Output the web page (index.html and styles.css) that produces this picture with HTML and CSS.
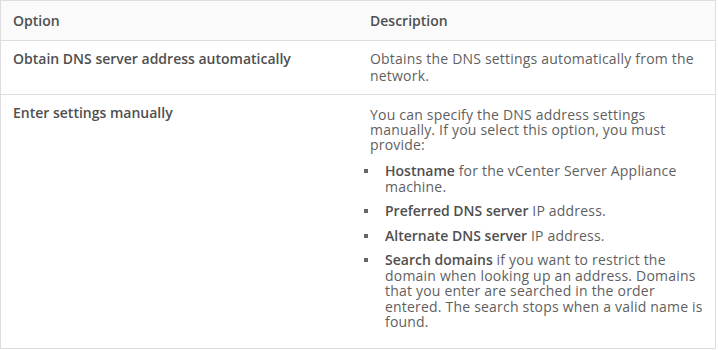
FILE: index.html
```html
<!DOCTYPE html>
<html lang="en">
<head>
<meta charset="utf-8">
<title>DNS settings</title>
<link rel="stylesheet" href="styles.css">
</head>
<body>
<table class="opts">
  <thead>
    <tr>
      <th class="col-opt">Option</th>
      <th class="col-desc">Description</th>
    </tr>
  </thead>
  <tbody>
    <tr>
      <td class="opt">Obtain DNS server address automatically</td>
      <td class="desc">Obtains the DNS settings automatically from the network.</td>
    </tr>
    <tr>
      <td class="opt">Enter settings manually</td>
      <td class="desc">
        <p class="lead">You can specify the DNS address settings manually. If you select this option, you must provide:</p>
        <ul class="items">
          <li><b>Hostname</b> for the vCenter Server Appliance machine.</li>
          <li><b>Preferred DNS server</b> IP address.</li>
          <li><b>Alternate DNS server</b> IP address.</li>
          <li><b>Search domains</b> if you want to restrict the domain when looking up an address. Domains that you enter are searched in the order entered. The search stops when a valid name is found.</li>
        </ul>
      </td>
    </tr>
  </tbody>
</table>
</body>
</html>
```
FILE: styles.css
```css
html, body {
  margin: 0;
  padding: 0;
  background: #fff;
}
body {
  font-family: "Open Sans", "Noto Sans", sans-serif;
  font-size: 14px;
  color: #565656;
}
.opts {
  border-collapse: collapse;
  width: 716px;
  border: 1px solid #dddddd;
  table-layout: fixed;
}
.opts th {
  background: #fafafa;
  text-align: left;
  font-weight: 600;
  height: 39px;
  padding: 0 12px;
  border-bottom: 1px solid #dddddd;
  color: #4f4f4f;
}
.col-opt { width: 333px; }
.opts td {
  vertical-align: top;
  padding: 9px 12px 10px 12px;
  line-height: 17px;
  border-bottom: 1px solid #dddddd;
}
.opt {
  font-weight: 600;
  color: #4f4f4f;
}
.desc {
  color: #5f5f5f;
  letter-spacing: 0.2px;
}
.lead { margin: 3px 0 0 0; line-height: 15px; }
.items {
  margin: 11px 0 8px 0;
  padding: 0 0 0 15px;
  list-style: none;
}
.items li {
  position: relative;
  line-height: 15.5px;
  margin-bottom: 9px;
}
.items li:last-child { margin-bottom: 0; }
.items li::before {
  content: "";
  position: absolute;
  left: -21px;
  top: 6px;
  width: 4px;
  height: 4px;
  background: #666;
}
.items b {
  display: inline-block;
  line-height: 15.5px;
  font-weight: 600;
  color: #4f4f4f;
  letter-spacing: 0;
}
```
